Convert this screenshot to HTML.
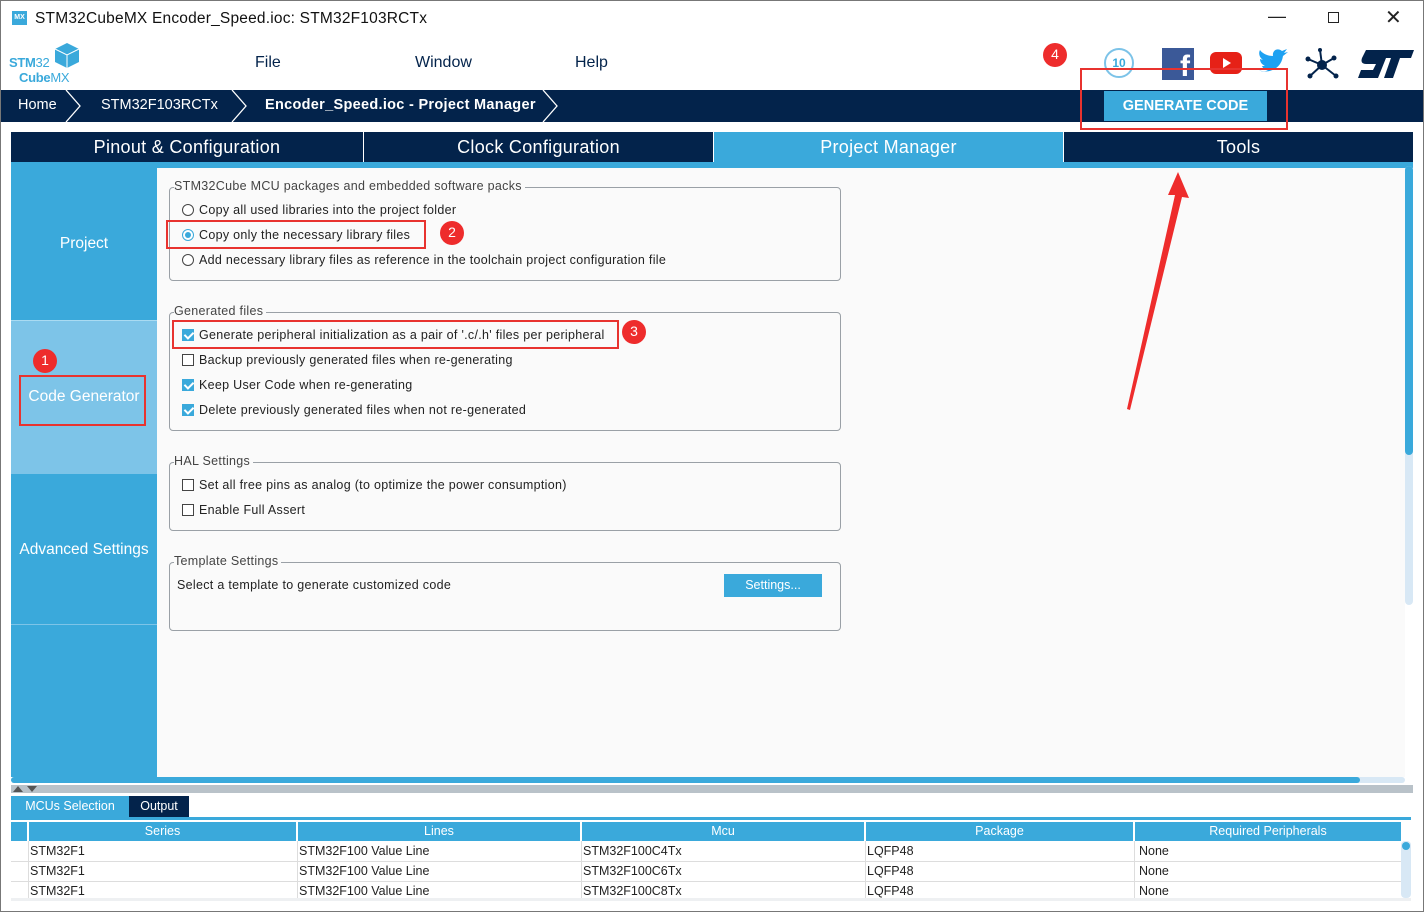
<!DOCTYPE html>
<html><head><meta charset="utf-8"><style>
*{margin:0;padding:0;box-sizing:border-box}
body{width:1424px;height:912px;position:relative;overflow:hidden;background:#fff;font-family:"Liberation Sans",Arial,sans-serif;color:#222}
.a{position:absolute}
.nav{background:#03234b}
.tab{position:absolute;top:132px;height:30px;background:#03234b;color:#fff;font-size:18px;text-align:center;line-height:30px;letter-spacing:0.3px}
.grp{position:absolute;left:169px;width:672px;border:1px solid #9aa0a6;border-radius:4px}
.lg{position:absolute;top:-9px;left:4px;background:#fafafa;font-size:12.5px;color:#444;padding-right:3px;letter-spacing:0.3px}
.row{position:absolute;left:12px;font-size:12.5px;color:#222;white-space:nowrap;letter-spacing:0.3px}
.cb{display:inline-block;width:12px;height:12px;border:1px solid #444;vertical-align:-2px;margin-right:5px;background:#fff}
.cbk{background:#3aa9db;border-color:#3aa9db;position:relative}
.cbk:after{content:"";position:absolute;left:3px;top:0px;width:4px;height:7px;border:solid #fff;border-width:0 2px 2px 0;transform:rotate(45deg)}
.rd{display:inline-block;width:12px;height:12px;border:1px solid #444;border-radius:50%;vertical-align:-2px;margin-right:5px;background:#fff;position:relative}
.rdk{border-color:#3aa9db}.rdk:after{content:"";position:absolute;left:2px;top:2px;width:6px;height:6px;border-radius:50%;background:#3aa9db}
.red{position:absolute;border:2px solid #e8332f}
.num{position:absolute;width:24px;height:24px;border-radius:50%;background:#ee2c2c;color:#fff;font-size:14px;text-align:center;line-height:23px}
.th{position:absolute;top:822px;height:19px;background:#3aa9db;color:#fff;font-size:12.5px;text-align:center;line-height:19px}
.td{position:absolute;font-size:12.5px;height:20px;line-height:20px;padding-left:1px;border-left:1px solid #ddd}
</style></head><body>
<div class="a" style="left:0;top:0;width:1424px;height:912px;border:1px solid #777"></div>
<div class="a" style="left:12px;top:11px;width:15px;height:14px;background:#3aa9db;color:#fff;font-size:7px;font-weight:bold;text-align:center;line-height:14px">MX</div>
<div class="a" style="left:35px;top:10px;font-size:15.5px;color:#111;letter-spacing:0.2px">STM32CubeMX Encoder_Speed.ioc: STM32F103RCTx</div>
<div class="a" style="left:1268px;top:6px;font-size:18px;color:#222">&#8212;</div>
<div class="a" style="left:1328px;top:12px;width:11px;height:11px;border:1px solid #222"></div>
<div class="a" style="left:1385px;top:5px;font-size:20px;color:#222">&#10005;</div>
<!-- logo -->
<div class="a" style="left:9px;top:56px;font-size:13px;font-weight:bold;color:#3aa9db;line-height:13px;letter-spacing:-0.3px">STM<span style="font-weight:normal">32</span></div>
<div class="a" style="left:19px;top:71px;font-size:13px;font-weight:bold;color:#3aa9db;line-height:13px;letter-spacing:-0.3px">Cube<span style="font-weight:normal">MX</span></div>
<svg class="a" style="left:54px;top:42px" width="26" height="28"><polygon points="13,1 25,7 25,20 13,26 1,20 1,7" fill="#3aa9db"/><polyline points="1,7 13,13 25,7" fill="none" stroke="#fff" stroke-width="1"/><line x1="13" y1="13" x2="13" y2="26" stroke="#fff"/></svg>
<div class="a" style="left:255px;top:54px;font-size:16px;color:#03234b">File</div>
<div class="a" style="left:415px;top:54px;font-size:16px;color:#03234b">Window</div>
<div class="a" style="left:575px;top:54px;font-size:16px;color:#03234b">Help</div>
<!-- social icons -->
<div class="a" style="left:1104px;top:48px;width:30px;height:30px;border:2px solid #7cc3e8;border-radius:50%;color:#3aa9db;font-size:12px;font-weight:bold;text-align:center;line-height:26px">10</div>
<div class="a" style="left:1162px;top:48px;width:32px;height:32px;background:#3b5998;color:#fff;font-size:30px;font-weight:bold;text-align:right;padding-right:4px;line-height:38px">f</div>
<div class="a" style="left:1210px;top:52px;width:32px;height:22px;background:#e62117;border-radius:6px"></div>
<svg class="a" style="left:1210px;top:52px" width="32" height="22"><polygon points="13,6 13,16 21,11" fill="#fff"/></svg>
<svg class="a" style="left:1257px;top:48px" width="34" height="30"><path d="M2,22 C10,26 24,22 26,8 L31,4 L27,5 L30,1 L25,3 C20,-1 15,3 16,8 C10,8 5,5 3,2 C1,6 3,10 6,12 L3,11 C3,15 6,17 8,18 L5,18 C6,21 9,22 11,22 C8,24 5,24 2,22Z" fill="#1da1f2"/></svg>
<svg class="a" style="left:1304px;top:48px" width="36" height="34"><g stroke="#03234b" stroke-width="2"><line x1="18" y1="17" x2="4" y2="11"/><line x1="18" y1="17" x2="30" y2="10"/><line x1="18" y1="17" x2="16" y2="2"/><line x1="18" y1="17" x2="6" y2="28"/><line x1="18" y1="17" x2="32" y2="28"/></g><g fill="#03234b"><circle cx="18" cy="17" r="5"/><circle cx="4" cy="11" r="2.5"/><circle cx="30" cy="10" r="2.5"/><circle cx="16" cy="2" r="2"/><circle cx="6" cy="28" r="2.5"/><circle cx="32" cy="28" r="2.5"/></g></svg>
<svg class="a" style="left:1356px;top:48px" width="60" height="32"><path d="M10,2 L58,2 L55,10 L44,10 L37,30 L28,30 L35,10 L30,10 L22,30 L2,30 L5,22 L17,22 L20,16 L10,16 Q4,16 6,10 Z" fill="#03234b"/></svg>
<!-- breadcrumb bar -->
<div class="a nav" style="left:1px;top:90px;width:1422px;height:32px"></div>
<svg class="a" style="left:0;top:90px" width="580" height="32"><g stroke="#fff" stroke-width="1.3" fill="none"><polyline points="66,0 80,16 66,32"/><polyline points="232,0 246,16 232,32"/><polyline points="543,0 557,16 543,32"/></g></svg>
<div class="a" style="left:18px;top:97px;font-size:14.5px;color:#fff">Home</div>
<div class="a" style="left:101px;top:97px;font-size:14.5px;color:#fff">STM32F103RCTx</div>
<div class="a" style="left:265px;top:97px;font-size:14.5px;color:#fff;font-weight:bold;letter-spacing:0.3px">Encoder_Speed.ioc - Project Manager</div>
<div class="a" style="left:1104px;top:91px;width:163px;height:30px;background:#3aa9db;color:#fff;font-size:14.5px;font-weight:bold;text-align:center;line-height:30px">GENERATE CODE</div>
<div class="red" style="left:1080px;top:68px;width:208px;height:62px"></div>
<div class="num" style="left:1043px;top:43px">4</div>
<!-- tabs -->
<div class="tab" style="left:11px;width:352px">Pinout &amp; Configuration</div>
<div class="tab" style="left:364px;width:349px">Clock Configuration</div>
<div class="tab" style="left:714px;width:349px;background:#3aa9db">Project Manager</div>
<div class="tab" style="left:1064px;width:349px">Tools</div>
<div class="a" style="left:11px;top:162px;width:1402px;height:6px;background:#3aa9db"></div>
<!-- content -->
<div class="a" style="left:157px;top:168px;width:1248px;height:609px;background:#fafafa"></div>
<div class="a" style="left:11px;top:168px;width:146px;height:609px;background:#3aa9db"></div>
<div class="a" style="left:11px;top:320px;width:146px;height:154px;background:#7dc4e8;border-top:1px solid #aadbf2"></div>
<div class="a" style="left:11px;top:624px;width:146px;height:1px;background:#7dc4e8"></div>
<div class="a" style="left:11px;top:235px;width:146px;text-align:center;color:#fff;font-size:15.5px">Project</div>
<div class="a" style="left:11px;top:388px;width:146px;text-align:center;color:#fff;font-size:15.5px">Code Generator</div>
<div class="a" style="left:11px;top:541px;width:146px;text-align:center;color:#fff;font-size:15.5px">Advanced Settings</div>
<div class="red" style="left:19px;top:375px;width:127px;height:51px"></div>
<div class="num" style="left:33px;top:349px">1</div>
<!-- groups -->
<div class="grp" style="top:187px;height:94px"><div class="lg">STM32Cube MCU packages and embedded software packs</div>
<div class="row" style="top:15px"><span class="rd"></span>Copy all used libraries into the project folder</div>
<div class="row" style="top:40px"><span class="rd rdk"></span>Copy only the necessary library files</div>
<div class="row" style="top:65px"><span class="rd"></span>Add necessary library files as reference in the toolchain project configuration file</div></div>
<div class="red" style="left:166px;top:220px;width:260px;height:29px"></div>
<div class="num" style="left:440px;top:221px">2</div>
<div class="grp" style="top:312px;height:119px"><div class="lg">Generated files</div>
<div class="row" style="top:15px"><span class="cb cbk"></span>Generate peripheral initialization as a pair of '.c/.h' files per peripheral</div>
<div class="row" style="top:40px"><span class="cb"></span>Backup previously generated files when re-generating</div>
<div class="row" style="top:65px"><span class="cb cbk"></span>Keep User Code when re-generating</div>
<div class="row" style="top:90px"><span class="cb cbk"></span>Delete previously generated files when not re-generated</div></div>
<div class="red" style="left:172px;top:320px;width:447px;height:29px"></div>
<div class="num" style="left:622px;top:320px">3</div>
<div class="grp" style="top:462px;height:69px"><div class="lg">HAL Settings</div>
<div class="row" style="top:15px"><span class="cb"></span>Set all free pins as analog (to optimize the power consumption)</div>
<div class="row" style="top:40px"><span class="cb"></span>Enable Full Assert</div></div>
<div class="grp" style="top:562px;height:69px"><div class="lg">Template Settings</div>
<div class="row" style="top:15px;left:7px">Select a template to generate customized code</div>
<div class="a" style="left:554px;top:11px;width:98px;height:23px;background:#3aa9db;color:#fff;font-size:12.5px;text-align:center;line-height:23px">Settings...</div></div>
<!-- arrow -->
<svg class="a" style="left:1120px;top:165px" width="70" height="250"><polygon points="58,7 69,33 62,32 10,245 7,244 55,30 48,30" fill="#ee2c2c"/></svg>
<!-- scrollbars -->
<div class="a" style="left:1405px;top:166px;width:8px;height:439px;background:#d8e8f5;border-radius:4px"></div>
<div class="a" style="left:1405px;top:166px;width:8px;height:289px;background:#3aa9db;border-radius:4px"></div>
<div class="a" style="left:11px;top:777px;width:1394px;height:6px;background:#d8e8f5;border-radius:3px"></div>
<div class="a" style="left:11px;top:777px;width:1349px;height:6px;background:#3aa9db;border-radius:3px"></div>
<div class="a" style="left:11px;top:785px;width:1402px;height:8px;background:#b9c2c9"></div>
<svg class="a" style="left:12px;top:785px" width="30" height="8"><polygon points="1,7 6,1 11,7" fill="#555"/><polygon points="15,1 25,1 20,7" fill="#555"/></svg>
<!-- bottom tabs -->
<div class="a" style="left:11px;top:796px;width:118px;height:21px;background:#3aa9db;color:#fff;font-size:12.5px;text-align:center;line-height:21px">MCUs Selection</div>
<div class="a" style="left:129px;top:796px;width:60px;height:21px;background:#03234b;color:#fff;font-size:12.5px;text-align:center;line-height:21px">Output</div>
<div class="a" style="left:11px;top:817px;width:1400px;height:3px;background:#3aa9db"></div>
<div class="a" style="left:11px;top:820px;width:1400px;height:81px;background:#fff"></div>
<div class="th" style="left:11px;width:16px"></div>
<div class="th" style="left:29px;width:267px">Series</div>
<div class="th" style="left:298px;width:282px">Lines</div>
<div class="th" style="left:582px;width:282px">Mcu</div>
<div class="th" style="left:866px;width:267px">Package</div>
<div class="th" style="left:1135px;width:266px">Required Peripherals</div>
<div class="a" style="left:11px;top:861px;width:1390px;height:1px;background:#ddd"></div>
<div class="a" style="left:11px;top:881px;width:1390px;height:1px;background:#ddd"></div>
<div class="a" style="left:11px;top:898px;width:1400px;height:3px;background:#eef0f2"></div>
<div class="a" style="left:1401px;top:841px;width:10px;height:57px;background:#d8e8f5;border-radius:4px"></div>
<div class="a" style="left:1402px;top:842px;width:8px;height:8px;background:#3aa9db;border-radius:50%"></div>
<div class="td" style="left:28px;top:841px">STM32F1</div><div class="td" style="left:297px;top:841px">STM32F100 Value Line</div><div class="td" style="left:581px;top:841px">STM32F100C4Tx</div><div class="td" style="left:865px;top:841px">LQFP48</div><div class="td" style="left:1134px;top:841px;padding-left:4px">None</div>
<div class="td" style="left:28px;top:861px">STM32F1</div><div class="td" style="left:297px;top:861px">STM32F100 Value Line</div><div class="td" style="left:581px;top:861px">STM32F100C6Tx</div><div class="td" style="left:865px;top:861px">LQFP48</div><div class="td" style="left:1134px;top:861px;padding-left:4px">None</div>
<div class="td" style="left:28px;top:881px;height:17px">STM32F1</div><div class="td" style="left:297px;top:881px;height:17px">STM32F100 Value Line</div><div class="td" style="left:581px;top:881px;height:17px">STM32F100C8Tx</div><div class="td" style="left:865px;top:881px;height:17px">LQFP48</div><div class="td" style="left:1134px;top:881px;height:17px;padding-left:4px">None</div>
</body></html>
